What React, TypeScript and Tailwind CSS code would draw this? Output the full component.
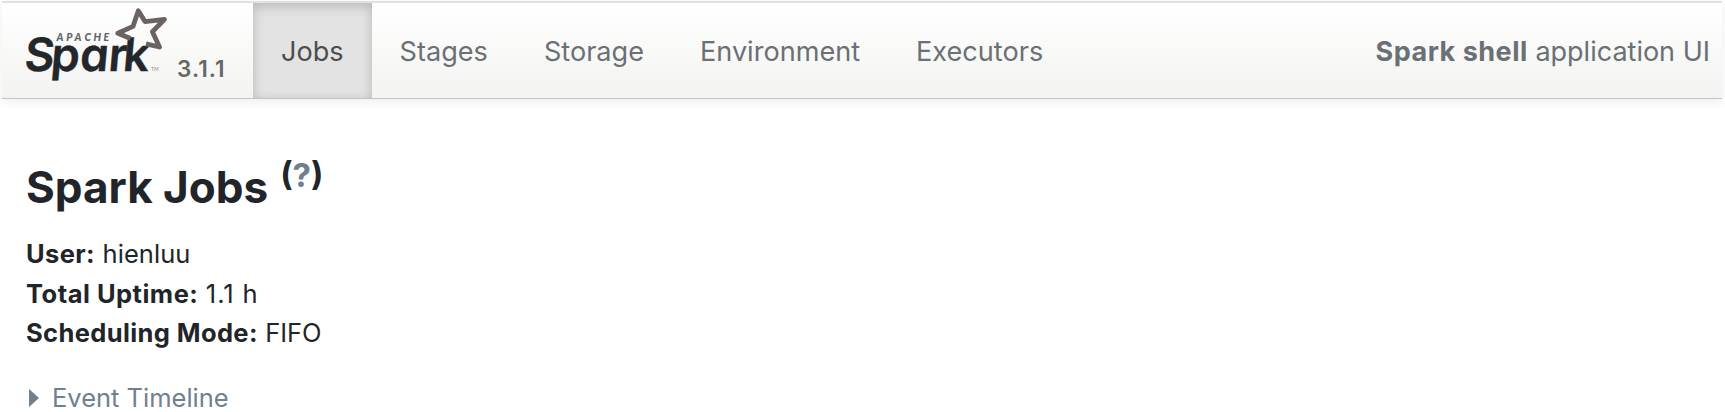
const tabs = [
  { label: 'Jobs', active: true },
  { label: 'Stages', active: false },
  { label: 'Storage', active: false },
  { label: 'Environment', active: false },
  { label: 'Executors', active: false },
];

const details = [
  { label: 'User:', value: 'hienluu', labelTracking: 'tracking-[0.4px]', valueTracking: 'tracking-[0.05px]' },
  { label: 'Total Uptime:', value: '1.1 h', labelTracking: 'tracking-[0.5px]', valueTracking: 'tracking-[0.9px]' },
  { label: 'Scheduling Mode:', value: 'FIFO', labelTracking: 'tracking-[0.38px]', valueTracking: 'tracking-[-0.1px]' },
];

function SparkLogo() {
  return (
    <svg width="150" height="84" viewBox="20 3 150 84" role="img" aria-label="Apache Spark">
      <g transform="translate(0 71) skewX(-5)" className="font-['Inter',sans-serif] [font-feature-settings:'cv11']">
        <text x="23.5 50 79 107.5 122" y="0" fontSize="46" fontWeight="600" fill="#23272b" stroke="#23272b" strokeWidth="0.4">
          Spark
        </text>
      </g>
      <text
        x="56.5 66.2 74.6 84.6 93.5 103.6"
        y="41"
        fontFamily="Lato, sans-serif"
        fontStyle="italic"
        fontSize="10.5"
        fontWeight="900"
        fill="#5c646b"
      >
        APACHE
      </text>
      <path
        d="M130.5 38.5L117.8 33.2L133 26.4L138.3 10.8L145 21.6L164.5 19.4L152.4 31.8L159.5 47L146 43.8"
        fill="none"
        stroke="#6b6361"
        strokeWidth="4.8"
        strokeLinejoin="round"
      />
      <text x="151" y="71" fontFamily="Lato, sans-serif" fontSize="5" fill="#8a8a8a">
        TM
      </text>
    </svg>
  );
}

export default function App() {
  return (
    <div className="h-[412px] w-[1725px] overflow-hidden bg-white font-['Inter',sans-serif] text-[#212529]">
      <header className="mx-[2px] mt-[1px] flex h-[98px] w-[1720px] items-stretch border-t-2 border-b border-t-[#e2e2e2] border-b-[#c2c2c8] bg-linear-to-b from-white to-[#f3f3f1] shadow-[0_3px_10px_rgba(0,0,0,0.07)]">
        <div className="flex w-[251px] shrink-0 items-start pl-[18px]">
          <SparkLogo />
          <span className="mt-[50px] ml-[7px] text-[22.5px] leading-[32px] font-semibold tracking-[1.1px] text-[#666]">3.1.1</span>
        </div>
        <nav className="flex">
          {tabs.map((tab) => (
            <a
              key={tab.label}
              className={`flex items-start px-[28px] pt-[29px] text-[27.1px] leading-[40px] ${
                tab.active
                  ? 'bg-[#e3e3e3] text-[#4b4d50] shadow-[inset_0_3px_12px_rgba(0,0,0,0.2)]'
                  : 'text-[#6a7075]'
              }`}
            >
              <span>{tab.label}</span>
            </a>
          ))}
        </nav>
        <p className="ml-auto pt-[29px] pr-[12px] text-[27px] leading-[40px] whitespace-nowrap text-[#6a7075]">
          <strong className="font-bold tracking-[0.5px]">Spark shell</strong> <span>application UI</span>
        </p>
      </header>
      <main className="pl-[26px]">
        <h3 className="flex pt-[56px] text-[44px] leading-[64px] font-bold">
          <span>Spark Jobs</span>
          <sup className="top-0 ml-[12px] text-[33px] leading-[40px]">
            (<a className="text-[#708090]">?</a>)
          </sup>
        </h3>
        <ul className="mt-[15px]">
          {details.map((item) => (
            <li key={item.label} className="flex gap-[7.5px] text-[25.5px] leading-[39.5px]">
              <strong className={`font-bold ${item.labelTracking}`}>{item.label}</strong>
              <span className={item.valueTracking}>{item.value}</span>
            </li>
          ))}
        </ul>
        <div className="mt-[25px] flex items-center text-[25.5px] leading-[40px] text-[#708090]">
          <svg width="10" height="20" viewBox="0 0 10 20" className="ml-[3px]">
            <path d="M0 1L10 10L0 19Z" fill="#708090" />
          </svg>
          <span className="ml-[13px]">Event Timeline</span>
        </div>
      </main>
    </div>
  );
}
